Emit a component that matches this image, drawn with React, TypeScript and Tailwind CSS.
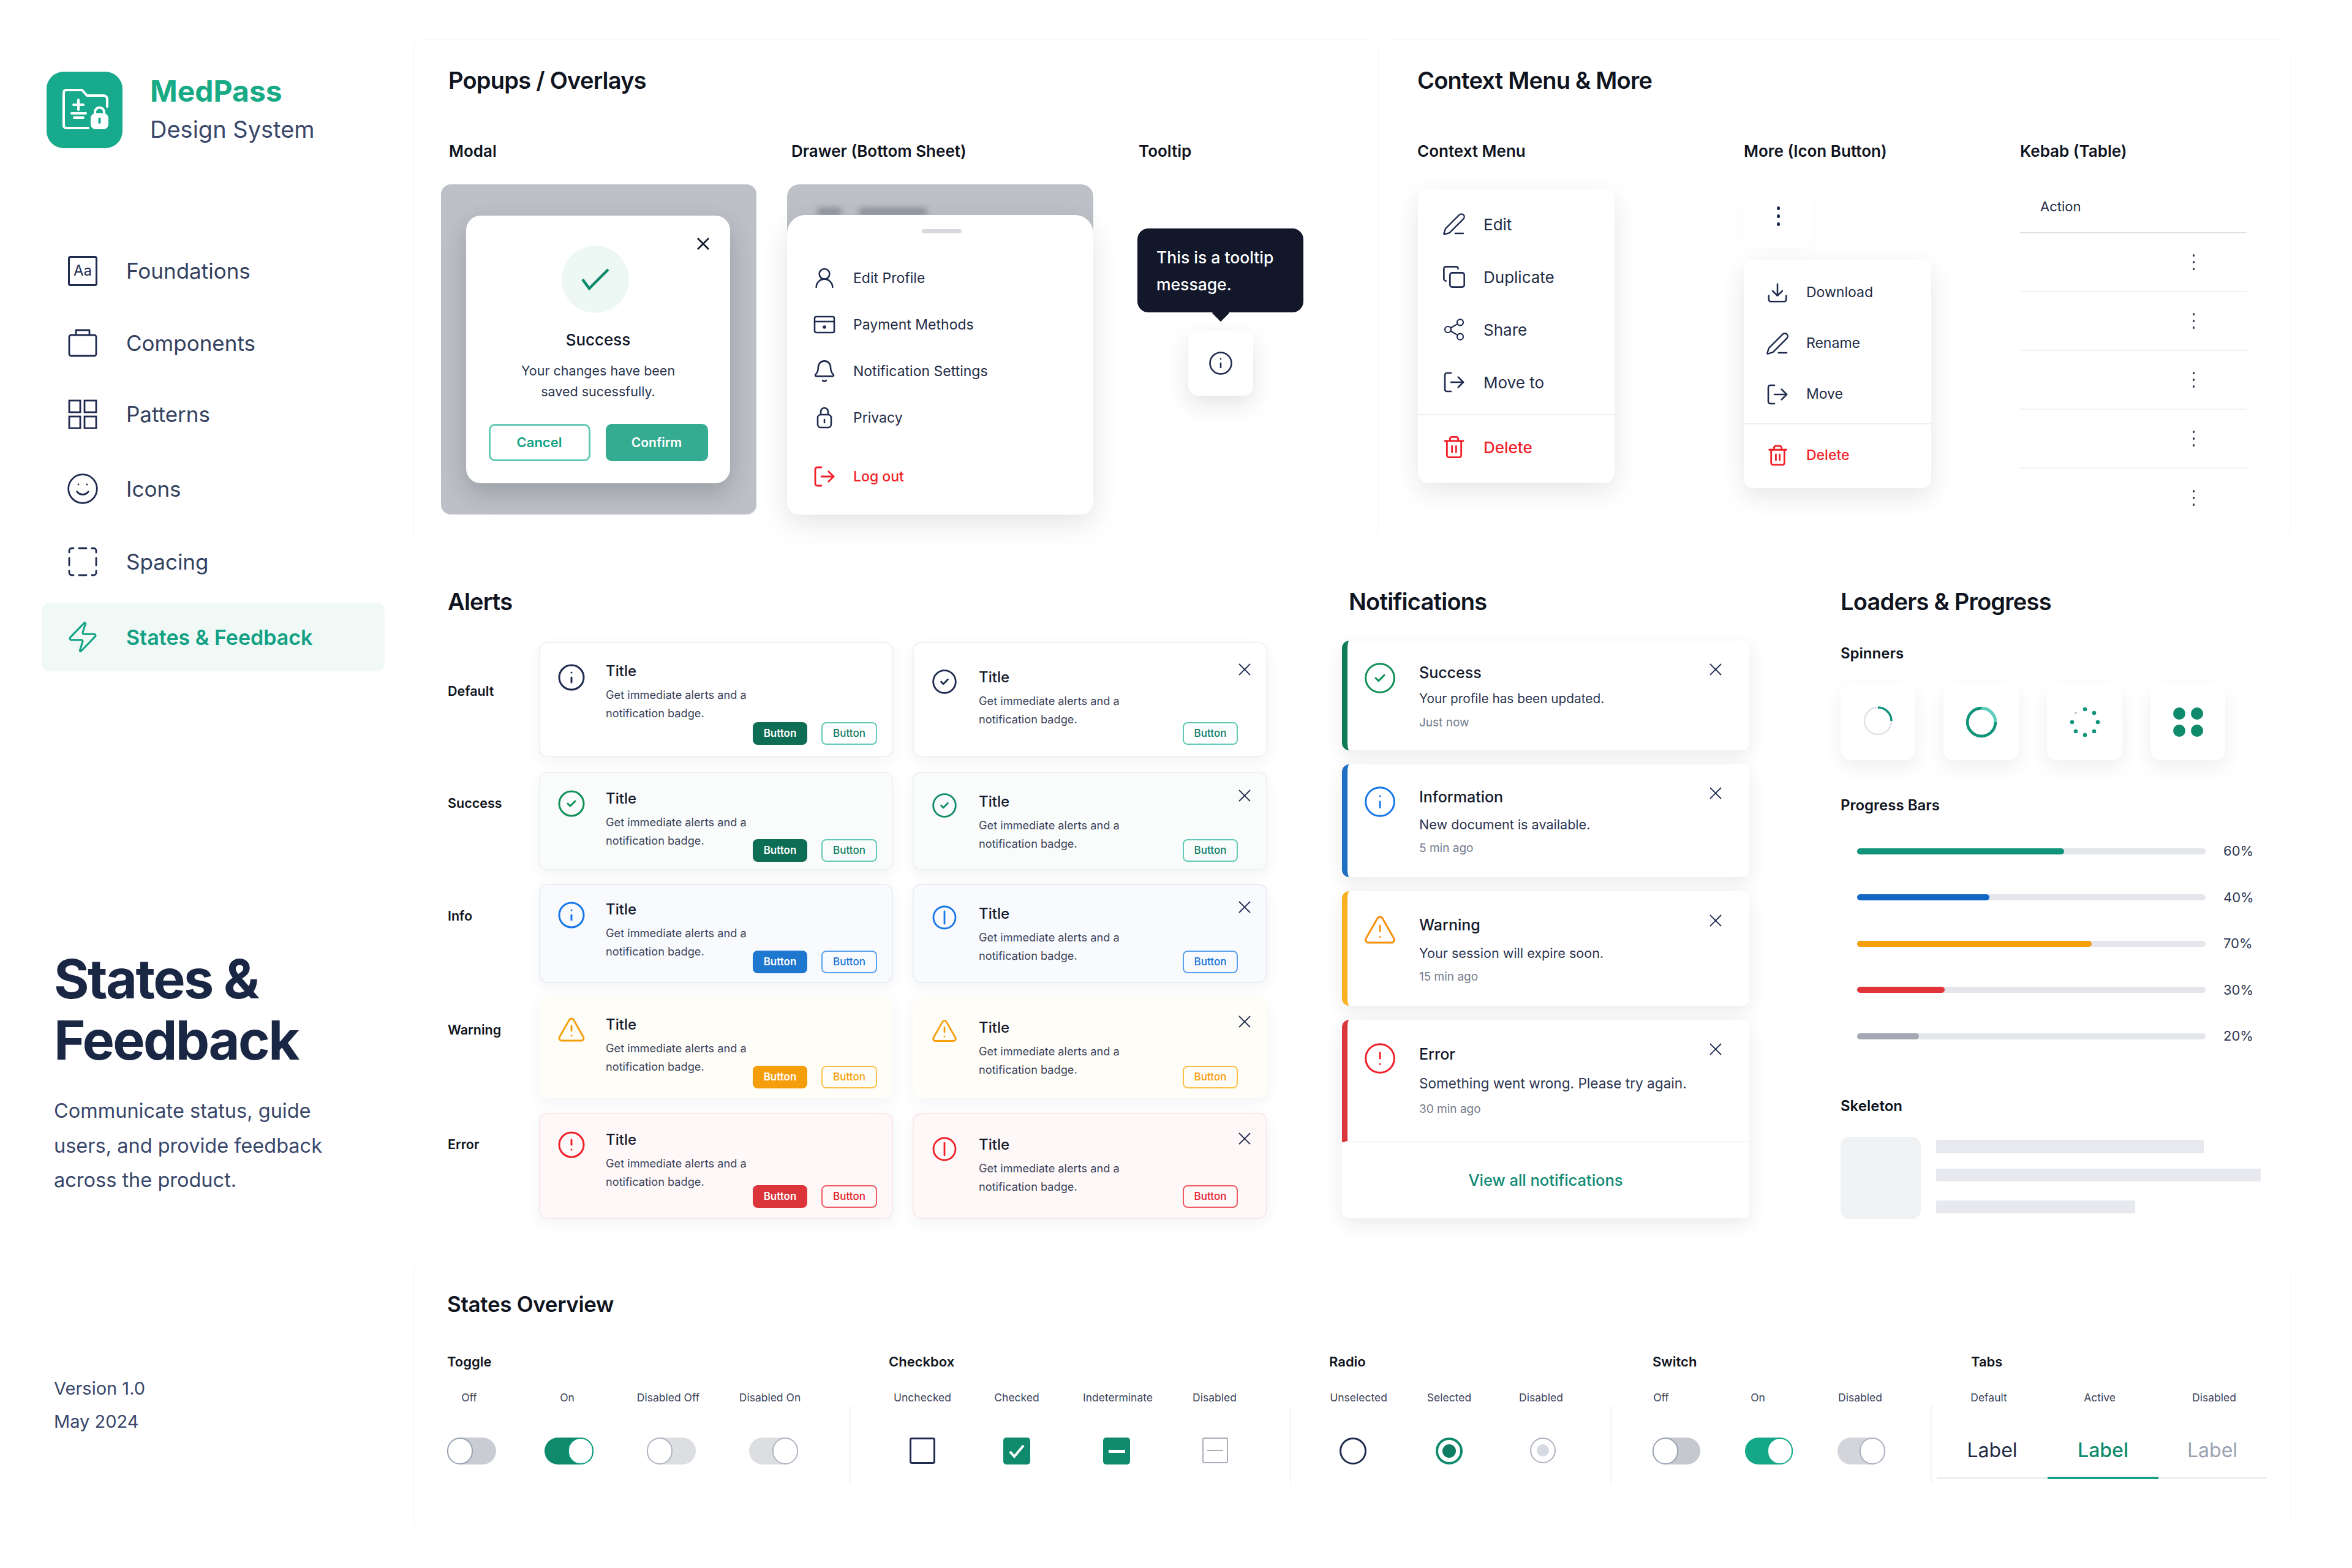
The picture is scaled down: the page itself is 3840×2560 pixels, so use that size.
import React from 'react';
import { Bell, CircleAlert, CircleCheck, Copy, Download, Info, LogOut, PenLine, Share2, Smile, Trash2, TriangleAlert, UserRound, Zap } from 'lucide-react';

const navy = '#1e2b4f';

const LogoMark: React.FC = () => (
    <div className="w-[124px] h-[125px] rounded-[28px] bg-[#17aa8c] shrink-0">
        <svg viewBox="0 0 124 125" className="w-full h-full" fill="none" stroke="#fff" strokeWidth="4" strokeLinecap="round" strokeLinejoin="round">
            <path d="M68 92H32a4 4 0 0 1-4-4V34a4 4 0 0 1 4-4h26l8 9h27a6 6 0 0 1 6 6v12" />
            <path d="M52 46v16M44 54h16M41 68h23M45 75h15" />
            <rect x="74" y="70" width="25" height="22" rx="6" fill="#fff" />
            <path d="M79 70v-4a7.500 7.500 0 0 1 15 0v4" />
            <path d="M86.500 77v6" stroke="#17aa8c" strokeWidth="4" />
        </svg>
    </div>
);

const BriefcaseIcon = () => (
    <svg viewBox="0 0 48 48" className="w-12 h-12" fill="none" stroke={navy} strokeWidth="2.800" strokeLinejoin="round">
        <rect x="2" y="11" width="44" height="34" rx="3" />
        <path d="M13 11V3h22v8" />
    </svg>
);

const GridIcon = () => (
    <svg viewBox="0 0 48 48" className="w-12 h-12" fill="none" stroke={navy} strokeWidth="2.800">
        <rect x="2" y="2" width="18" height="19" />
        <rect x="27" y="2" width="19" height="19" />
        <rect x="2" y="28" width="18" height="19" />
        <rect x="27" y="28" width="19" height="19" />
    </svg>
);

const SpacingIcon = () => (
    <svg viewBox="0 0 48 48" className="w-12 h-12" fill="none" stroke={navy} strokeWidth="2.800" strokeLinecap="round">
        <path d="M2 9V6a4 4 0 0 1 4-4h3M18 2h12M39 2h3a4 4 0 0 1 4 4v3M46 18v12M46 39v3a4 4 0 0 1-4 4h-3M30 46H18M9 46H6a4 4 0 0 1-4-4v-3M2 30V18" />
    </svg>
);

const XMark: React.FC<{ className?: string; stroke?: string; weight?: number }> = ({ className, stroke, weight }) => (
    <svg viewBox="0 0 20 20" className={className} fill="none" stroke={stroke ?? navy} strokeWidth={weight ?? 1.800}>
        <path d="M1 1l18 18M19 1L1 19" />
    </svg>
);

const navItems = [
    { label: 'Foundations', h: 'h-[118px]', icon: <div className="w-12 h-[49px] border-[3px] border-[#1e2b4f] rounded-[4px] flex items-center justify-center text-[24px] text-[#1e2b4f]">Aa</div> },
    { label: 'Components', h: 'h-[118px]', icon: <BriefcaseIcon /> },
    { label: 'Patterns', h: 'h-[114px]', icon: <GridIcon /> },
    { label: 'Icons', h: 'h-[130px]', icon: <Smile size={60} strokeWidth={3} absoluteStrokeWidth color={navy} /> },
    { label: 'Spacing', h: 'h-[108px]', icon: <SpacingIcon /> },
];

const Sidebar: React.FC = () => (
    <aside className="w-[675px] h-[2560px] shrink-0 pt-[117px] border-r border-[#f5f6f7]">
        <div className="flex items-center pl-[76px]">
            <LogoMark />
            <div className="ml-[45px]">
                <p className="text-[48px] leading-[62px] font-bold text-[#17aa84]">MedPass</p>
                <p className="text-[38px] leading-[62px] text-[#38476a]">Design System</p>
            </div>
        </div>
        <nav className="mt-[141px] pl-[68px]">
            {navItems.map((item) => (
                <div key={item.label} className={`${item.h} flex items-center pl-[39px]`}>
                    <div className="w-[56px] flex justify-center">{item.icon}</div>
                    <span className="ml-[43px] text-[35px] text-[#33415f]">{item.label}</span>
                </div>
            ))}
            <div className="mt-[13px] h-[112px] w-[560px] rounded-[14px] bg-[#f0f9f6] flex items-center pl-[39px]">
                <div className="w-[56px] flex justify-center"><Zap size={56} strokeWidth={3} absoluteStrokeWidth color="#12a184" /></div>
                <span className="ml-[43px] text-[34px] font-semibold text-[#12a184]">States &amp; Feedback</span>
            </div>
        </nav>
        <div className="pl-[88px]">
            <h1 className="mt-[452px] text-[88px] leading-[100px] font-bold tracking-[-0.03em] text-[#1a2744]">States &amp;<br />Feedback</h1>
            <p className="mt-[38px] text-[32.500px] leading-[56.500px] text-[#38476a]">Communicate status, guide<br />users, and provide feedback<br />across the product.</p>
            <p className="mt-[284px] text-[29px] leading-[54px] text-[#38476a]">Version 1.0<br />May 2024</p>
        </div>
    </aside>
);

const SectionTitle: React.FC<{ children: React.ReactNode; className?: string }> = ({ children, className }) => (
    <h2 className={`text-[38px] leading-[48px] font-semibold tracking-[-0.02em] text-[#0f1420] ${className ?? ''}`}>{children}</h2>
);

const Label: React.FC<{ children: React.ReactNode; className?: string }> = ({ children, className }) => (
    <p className={`text-[26px] leading-[36px] font-semibold text-[#0f1420] whitespace-nowrap ${className ?? ''}`}>{children}</p>
);

const PaymentIcon = () => (
    <svg viewBox="0 0 36 36" className="w-9 h-9" fill="none" stroke={navy} strokeWidth="2.600">
        <rect x="2" y="5" width="32" height="26" rx="2.500" />
        <path d="M2 13h32" />
        <circle cx="18" cy="22" r="1.500" fill={navy} />
    </svg>
);

const TallLock = () => (
    <svg viewBox="0 0 36 36" className="w-9 h-9" fill="none" stroke={navy} strokeWidth="2.600">
        <rect x="7" y="13" width="22" height="21" rx="5" />
        <path d="M12 13V8a6 6 0 0 1 12 0v5" />
        <path d="M18 21v5" strokeLinecap="round" />
    </svg>
);

const drawerItems = [
    { label: 'Edit Profile', icon: <UserRound size={40} strokeWidth={2.600} absoluteStrokeWidth color={navy} /> },
    { label: 'Payment Methods', icon: <PaymentIcon /> },
    { label: 'Notification Settings', icon: <Bell size={40} strokeWidth={2.600} absoluteStrokeWidth color={navy} /> },
    { label: 'Privacy', icon: <TallLock /> },
];

const Overlays: React.FC = () => (
    <section className="w-[1575px] h-[820px] pl-[44px] pt-[42px] rounded-[20px] border border-[#f8f9fa]">
        <SectionTitle className="ml-[12px]">Popups / Overlays</SectionTitle>
        <div className="mt-[74px] flex items-start">
            <div className="w-[515px]">
                <Label className="ml-[13px]">Modal</Label>
                <div className="mt-[36px] h-[539px] rounded-[16px] bg-[#bdc0c6] pl-[41px] pt-[51px]">
                    <div className="relative w-[431px] h-[437px] rounded-[24px] bg-white shadow-[0_16px_40px_rgba(30,35,50,0.22)] flex flex-col items-center pt-[49px]">
                        <XMark stroke="#10162a" weight={2.600} className="absolute top-[36px] right-[34px] w-5 h-5" />
                        <div className="w-[110px] h-[110px] rounded-full bg-[#edf8f5] flex items-center justify-center mr-[9px]">
                            <svg viewBox="0 0 46 36" className="w-[46px] h-[36px]" fill="none" stroke="#0f8a6c" strokeWidth="4.500">
                                <path d="M2 18l11 15L44 2" />
                            </svg>
                        </div>
                        <p className="mt-[26px] text-[26px] leading-[36px] font-medium text-[#10162a]">Success</p>
                        <p className="mt-[15px] text-[21.500px] leading-[34px] text-center text-[#2c3650]">Your changes have been<br />saved sucessfully.</p>
                        <div className="mt-[36px] flex gap-[25px]">
                            <div className="w-[166px] h-[61px] rounded-[10px] border-[3px] border-[#62c9b6] flex items-center justify-center text-[22px] font-semibold text-[#12a184]">Cancel</div>
                            <div className="w-[167px] h-[61px] rounded-[10px] bg-[#35ab92] flex items-center justify-center text-[21px] font-semibold text-white">Confirm</div>
                        </div>
                    </div>
                </div>
            </div>
            <div className="w-[500px] ml-[50px]">
                <Label className="ml-[7px]">Drawer (Bottom Sheet)</Label>
                <div className="mt-[36px] h-[90px] rounded-t-[20px] bg-[#bdc0c6] flex gap-[30px] pl-[50px] pt-[38px]">
                    <div className="w-[38px] h-[14px] bg-[#8f939c] blur-[5px]" />
                    <div className="w-[110px] h-[14px] bg-[#8f939c] blur-[5px]" />
                </div>
                <div className="relative -mt-[40px] h-[489px] rounded-t-[30px] rounded-b-[20px] bg-white shadow-[0_14px_44px_rgba(30,35,50,0.12)] pt-[23px]">
                    <div className="ml-[220px] w-[65px] h-[7px] rounded-full bg-[#d6d9de]" />
                    <div className="mt-[35px] pl-[41px]">
                        {drawerItems.map((item) => (
                            <div key={item.label} className="h-[76px] flex items-center">
                                <div className="w-10 flex justify-center">{item.icon}</div>
                                <span className="ml-[27px] text-[23px] text-[#222c45]">{item.label}</span>
                            </div>
                        ))}
                        <div className="mt-[20px] h-[76px] flex items-center">
                            <div className="w-10 flex justify-center"><LogOut size={40} strokeWidth={2.800} absoluteStrokeWidth color="#f01f28" /></div>
                            <span className="ml-[27px] text-[23px] font-medium text-[#f01f28]">Log out</span>
                        </div>
                    </div>
                </div>
            </div>
            <div className="w-[271px] ml-[72px]">
                <Label className="ml-[2px]">Tooltip</Label>
                <div className="relative mt-[108px] h-[137px] rounded-[18px] bg-[#12172a] pl-[31px] pt-[25px] text-[26.500px] leading-[44px] font-medium text-white whitespace-nowrap">
                    This is a tooltip<br />message.
                    <div className="absolute left-[126px] -bottom-[11px] w-[20px] h-[20px] rotate-45 bg-[#12172a]" />
                </div>
                <div className="mt-[30px] mx-auto w-[106px] h-[106px] rounded-[16px] bg-white shadow-[0_14px_36px_rgba(30,35,50,0.12)] flex items-center justify-center">
                    <Info size={42} strokeWidth={2.600} absoluteStrokeWidth color={navy} />
                </div>
            </div>
        </div>
    </section>
);

const contextItems = [
    { label: 'Edit', icon: <PenLine size={44} strokeWidth={2.600} absoluteStrokeWidth color={navy} /> },
    { label: 'Duplicate', icon: <Copy size={40} strokeWidth={2.600} absoluteStrokeWidth color={navy} /> },
    { label: 'Share', icon: <Share2 size={40} strokeWidth={2.200} absoluteStrokeWidth color={navy} /> },
    { label: 'Move to', icon: <LogOut size={40} strokeWidth={2.600} absoluteStrokeWidth color={navy} /> },
];

const moreItems = [
    { label: 'Download', icon: <Download size={38} strokeWidth={2.600} absoluteStrokeWidth color={navy} /> },
    { label: 'Rename', icon: <PenLine size={42} strokeWidth={2.600} absoluteStrokeWidth color={navy} /> },
    { label: 'Move', icon: <LogOut size={40} strokeWidth={2.600} absoluteStrokeWidth color={navy} /> },
];

const Kebab: React.FC<{ big?: boolean }> = ({ big }) => (
    <div className="flex flex-col gap-[7px]">
        <span className={big ? 'w-[5px] h-[6px] rounded-full bg-[#1e2b4f]' : 'w-[3px] h-[4px] rounded-full bg-[#2c3650]'} />
        <span className={big ? 'w-[5px] h-[6px] rounded-full bg-[#1e2b4f]' : 'w-[3px] h-[4px] rounded-full bg-[#2c3650]'} />
        <span className={big ? 'w-[5px] h-[6px] rounded-full bg-[#1e2b4f]' : 'w-[3px] h-[4px] rounded-full bg-[#2c3650]'} />
    </div>
);

const ContextMore: React.FC = () => (
    <section className="w-[1490px] h-[820px] pl-[63px] pt-[42px] rounded-[20px] border border-[#f8f9fa]">
        <SectionTitle>Context Menu &amp; More</SectionTitle>
        <div className="mt-[74px] flex items-start">
            <div className="w-[533px]">
                <Label>Context Menu</Label>
                <div className="mt-[43px] ml-px w-[321px] h-[480px] rounded-[16px] bg-white shadow-[0_14px_40px_rgba(30,35,50,0.11)] pt-[15px]">
                    {contextItems.map((item) => (
                        <div key={item.label} className="h-[86px] flex items-center pl-[39px]">
                            <div className="w-10 flex justify-center">{item.icon}</div>
                            <span className="ml-[28px] text-[26px] text-[#222c45]">{item.label}</span>
                        </div>
                    ))}
                    <div className="mt-[9px] border-t-2 border-[#eff0f2]" />
                    <div className="mt-[9px] h-[86px] flex items-center pl-[39px]">
                        <div className="w-10 flex justify-center"><Trash2 size={40} strokeWidth={2.800} absoluteStrokeWidth color="#f01f28" /></div>
                        <span className="ml-[28px] text-[26px] font-medium text-[#f01f28]">Delete</span>
                    </div>
                </div>
            </div>
            <div className="w-[451px]">
                <Label>More (Icon Button)</Label>
                <div className="mt-[36px] w-[113px] h-[103px] rounded-[14px] bg-white shadow-[0_10px_28px_rgba(30,35,50,0.02)] flex items-center justify-center">
                    <Kebab big />
                </div>
                <div className="mt-[20px] w-[306px] h-[373px] rounded-[16px] bg-white shadow-[0_14px_40px_rgba(30,35,50,0.11)] pt-[12px]">
                    {moreItems.map((item) => (
                        <div key={item.label} className="h-[83px] flex items-center pl-[35px]">
                            <div className="w-10 flex justify-center">{item.icon}</div>
                            <span className="ml-[27px] text-[23px] text-[#222c45]">{item.label}</span>
                        </div>
                    ))}
                    <div className="mt-[6px] border-t-2 border-[#eff0f2]" />
                    <div className="mt-[9px] h-[83px] flex items-center pl-[35px]">
                        <div className="w-10 flex justify-center"><Trash2 size={37} strokeWidth={2.800} absoluteStrokeWidth color="#f01f28" /></div>
                        <span className="ml-[27px] text-[23px] font-medium text-[#f01f28]">Delete</span>
                    </div>
                </div>
            </div>
            <div className="w-[370px]">
                <Label>Kebab (Table)</Label>
                <div className="mt-[36px] h-[80px] border-b-2 border-[#dfe1e5] pl-[33px] pt-[21px] text-[22px] leading-[30px] text-[#222c45]">Action</div>
                {[0, 1, 2, 3, 4].map((i) => (
                    <div key={i} className={i < 4 ? 'h-[96px] border-b-2 border-[#f0f1f3] flex items-center justify-end pr-[85px]' : 'h-[96px] flex items-center justify-end pr-[85px]'}>
                        <Kebab />
                    </div>
                ))}
            </div>
        </div>
    </section>
);

const CircleLine: React.FC<{ color: string }> = ({ color }) => (
    <svg viewBox="0 0 44 44" className="w-11 h-11" fill="none" stroke={color} strokeWidth="2.800" strokeLinecap="round">
        <circle cx="22" cy="22" r="18" />
        <path d="M22 12v20" />
    </svg>
);

const alertThemes = {
    default: { card: 'bg-white border-[#f0f1f3]', solid: 'bg-[#0e6e55]', outline: 'border-[#62c9b6] text-[#0e7c66]' },
    success: { card: 'bg-[#f9fcfb] border-[#eef3f1]', solid: 'bg-[#0e6e55]', outline: 'border-[#62c9b6] text-[#0e7c66]' },
    info: { card: 'bg-[#f8fafe] border-[#e9eef6]', solid: 'bg-[#1f78cf]', outline: 'border-[#5aa2ee] text-[#1a73d8]' },
    warning: { card: 'bg-[#fffdf8] border-[#fffdf8]', solid: 'bg-[#f59e0b]', outline: 'border-[#fbc14a] text-[#f59e0b]' },
    error: { card: 'bg-[#fff8f8] border-[#f8e8ea]', solid: 'bg-[#dc3539]', outline: 'border-[#ef5b62] text-[#e5212b]' },
};

const alertRows = [
    {
        name: 'Default', theme: alertThemes.default, row: 'h-[188px]', labelTop: 'mt-[63px]',
        leftIcon: <Info size={48} strokeWidth={3} absoluteStrokeWidth color={navy} />, rightIcon: <CircleCheck size={44} strokeWidth={2.800} absoluteStrokeWidth color={navy} />,
        l: ['mt-[32px]', 'mt-[29px]', 'mb-[18px]'], r: ['mt-[41px]', 'mt-[39px]', 'mt-[33px]'],
    },
    {
        name: 'Success', theme: alertThemes.success, row: 'mt-[24px] h-[161px]', labelTop: 'mt-[34px]',
        leftIcon: <CircleCheck size={48} strokeWidth={3} absoluteStrokeWidth color="#0f8f57" />, rightIcon: <CircleCheck size={44} strokeWidth={2.800} absoluteStrokeWidth color="#0f8a6c" />,
        l: ['mt-[26px]', 'mt-[25px]', 'mb-[12px]'], r: ['mt-[31px]', 'mt-[30px]', 'mt-[27px]'],
    },
    {
        name: 'Info', theme: alertThemes.info, row: 'mt-[22px] h-[162px]', labelTop: 'mt-[35px]',
        leftIcon: <Info size={48} strokeWidth={3} absoluteStrokeWidth color="#1677e8" />, rightIcon: <CircleLine color="#1677e8" />,
        l: ['mt-[25px]', 'mt-[23px]', 'mb-[14px]'], r: ['mt-[31px]', 'mt-[30px]', 'mt-[26px]'],
    },
    {
        name: 'Warning', theme: alertThemes.warning, row: 'mt-[23px] h-[165px]', labelTop: 'mt-[36px]',
        leftIcon: <TriangleAlert size={50} strokeWidth={3} absoluteStrokeWidth color="#f59e0b" />, rightIcon: <TriangleAlert size={44} strokeWidth={2.800} absoluteStrokeWidth color="#f59e0b" />,
        l: ['mt-[26px]', 'mt-[26px]', 'mb-[14px]'], r: ['mt-[31px]', 'mt-[31px]', 'mt-[28px]'],
    },
    {
        name: 'Error', theme: alertThemes.error, row: 'mt-[24px] h-[173px]', labelTop: 'mt-[34px]',
        leftIcon: <CircleAlert size={48} strokeWidth={3} absoluteStrokeWidth color="#f01f28" />, rightIcon: <CircleLine color="#f01f28" />,
        l: ['mt-[26px]', 'mt-[25px]', 'mb-[16px]'], r: ['mt-[35px]', 'mt-[33px]', 'mt-[30px]'],
    },
];

const AlertText: React.FC<{ className: string }> = ({ className }) => (
    <div className={className}>
        <p className="text-[24px] leading-[34px] font-medium text-[#141a2c]">Title</p>
        <p className="mt-[6px] text-[18.200px] leading-[30px] text-[#3a4358] whitespace-nowrap">Get immediate alerts and a<br />notification badge.</p>
    </div>
);

const Alerts: React.FC = () => (
    <section className="w-[1450px] h-[1100px] pl-[51px] pt-[33px]">
        <SectionTitle>Alerts</SectionTitle>
        <div className="mt-[42px]">
            {alertRows.map((row) => (
                <div key={row.name} className={`flex ${row.row}`}>
                    <p className={`w-[149px] text-[21.500px] leading-[34px] font-semibold text-[#0f1420] ${row.labelTop}`}>{row.name}</p>
                    <div className={`w-[578px] flex items-start rounded-[14px] border-2 shadow-[0_8px_24px_rgba(30,35,50,0.05)] ${row.theme.card}`}>
                        <div className={`ml-[27px] w-12 shrink-0 flex justify-center ${row.l[0]}`}>{row.leftIcon}</div>
                        <AlertText className={`ml-[32px] ${row.l[1]}`} />
                        <div className={`ml-auto mr-[24px] self-end flex gap-[23px] ${row.l[2]}`}>
                            <div className={`w-[89px] h-[37px] rounded-[8px] flex items-center justify-center text-[17px] font-semibold text-white ${row.theme.solid}`}>Button</div>
                            <div className={`w-[91px] h-[37px] rounded-[8px] border-2 flex items-center justify-center text-[17px] font-medium ${row.theme.outline}`}>Button</div>
                        </div>
                    </div>
                    <div className={`ml-[32px] w-[579px] flex items-start rounded-[14px] border-2 shadow-[0_8px_24px_rgba(30,35,50,0.05)] ${row.theme.card}`}>
                        <div className={`ml-[28px] w-11 shrink-0 ${row.r[0]}`}>{row.rightIcon}</div>
                        <AlertText className={`ml-[34px] ${row.r[1]}`} />
                        <div className={`ml-auto self-end ${row.l[2]}`}>
                            <div className={`w-[90px] h-[37px] rounded-[8px] border-2 flex items-center justify-center text-[17px] font-medium ${row.theme.outline}`}>Button</div>
                        </div>
                        <XMark className={`ml-[1px] mr-[25px] w-5 h-5 shrink-0 ${row.r[2]}`} />
                    </div>
                </div>
            ))}
        </div>
    </section>
);

const notices = [
    { title: 'Success', body: 'Your profile has been updated.', size: 'text-[20.800px]', time: 'Just now', bar: 'border-[#0f7a55]', h: 'h-[179px]', icon: <CircleCheck size={56} strokeWidth={3} absoluteStrokeWidth color="#0f8f57" />, c: ['mt-[33px]', 'mt-[35px]', 'mt-[11px]', 'mt-[10px]', 'mt-[37px]'] },
    { title: 'Information', body: 'New document is available.', size: 'text-[21.600px]', time: '5 min ago', bar: 'border-[#1f6fc2]', h: 'h-[184px]', icon: <Info size={56} strokeWidth={3} absoluteStrokeWidth color="#1677e8" />, c: ['mt-[33px]', 'mt-[36px]', 'mt-[13px]', 'mt-[10px]', 'mt-[37px]'] },
    { title: 'Warning', body: 'Your session will expire soon.', size: 'text-[21.600px]', time: '15 min ago', bar: 'border-[#fbb024]', h: 'h-[187px]', icon: <TriangleAlert size={56} strokeWidth={3} absoluteStrokeWidth color="#f58f0b" />, c: ['mt-[35px]', 'mt-[38px]', 'mt-[14px]', 'mt-[10px]', 'mt-[38px]'] },
];

const Notice: React.FC<{ n: (typeof notices)[number]; className?: string }> = ({ n, className }) => (
    <div className={`flex items-start border-l-[9px] ${n.bar} ${n.h} ${className ?? ''}`}>
        <div className={`ml-[25px] w-14 shrink-0 ${n.c[0]}`}>{n.icon}</div>
        <div className={`ml-[36px] ${n.c[1]}`}>
            <p className="text-[25px] leading-[34px] font-medium text-[#141a2c]">{n.title}</p>
            <p className={`leading-[30px] text-[#2c3650] whitespace-nowrap ${n.size} ${n.c[2]}`}>{n.body}</p>
            <p className={`text-[19px] leading-[28px] text-[#737b8c] ${n.c[3]}`}>{n.time}</p>
        </div>
        <XMark className={`ml-auto mr-[45px] w-[20px] h-[20px] shrink-0 ${n.c[4]}`} />
    </div>
);

const errorNotice = { title: 'Error', body: 'Something went wrong. Please try again.', size: 'text-[22.600px]', time: '30 min ago', bar: 'border-[#d9363e]', h: 'h-[200px]', icon: <CircleAlert size={56} strokeWidth={3} absoluteStrokeWidth color="#f01f28" />, c: ['mt-[35px]', 'mt-[39px]', 'mt-[16px]', 'mt-[13px]', 'mt-[38px]'] };

const Notifications: React.FC = () => (
    <section className="w-[770px] h-[1100px] ml-[30px] pl-[31px] pt-[33px]">
        <SectionTitle className="ml-[11px]">Notifications</SectionTitle>
        <div className="mt-[40px] w-[665px] flex flex-col gap-[23px]">
            {notices.map((n) => (
                <Notice key={n.title} n={n} className="rounded-[12px] bg-white shadow-[0_10px_30px_rgba(30,35,50,0.09)]" />
            ))}
            <div className="rounded-[12px] bg-white shadow-[0_10px_30px_rgba(30,35,50,0.09)]">
                <Notice n={errorNotice} className="rounded-tl-[12px] border-b-2 border-b-[#f5f6f7]" />
                <div className="h-[124px] flex items-center justify-center text-[25.500px] font-medium text-[#0f8a74]">View all notifications</div>
            </div>
        </div>
    </section>
);

const progress = [
    { pct: '60%', w: 'w-[338px]', fill: 'bg-[#0f947a]' },
    { pct: '40%', w: 'w-[216px]', fill: 'bg-[#1267c4]' },
    { pct: '70%', w: 'w-[383px]', fill: 'bg-[#f59f0b]' },
    { pct: '30%', w: 'w-[143px]', fill: 'bg-[#e1333a]' },
    { pct: '20%', w: 'w-[101px]', fill: 'bg-[#a3a8b2]' },
];

const spinnerDots = [[25, 4], [40, 10], [46, 25], [40, 40], [25, 46], [10, 40], [4, 25]];

const Spinners: React.FC = () => (
    <div className="mt-[33px] flex gap-[46px]">
        <div className="w-[122px] h-[125px] rounded-[16px] bg-white shadow-[0_12px_30px_rgba(30,35,50,0.07)] flex items-center justify-center">
            <svg viewBox="0 0 50 50" className="w-[50px] h-[50px] -mt-[3px]" fill="none" strokeWidth="2.500">
                <circle cx="25" cy="25" r="22" stroke="#dfe2e8" />
                <path d="M25 3a22 22 0 0 1 22 22" stroke="#0f947a" strokeWidth="3.500" />
            </svg>
        </div>
        <div className="w-[123px] h-[125px] rounded-[16px] bg-white shadow-[0_12px_30px_rgba(30,35,50,0.07)] flex items-center justify-center">
            <svg viewBox="0 0 50 50" className="w-[52px] h-[52px]" fill="none" strokeWidth="4.500">
                <circle cx="25" cy="25" r="22" stroke="#0f947a" />
                <path d="M25 3a22 22 0 0 1 22 22" stroke="#5fd0bd" />
            </svg>
        </div>
        <div className="w-[123px] h-[125px] rounded-[16px] bg-white shadow-[0_12px_30px_rgba(30,35,50,0.07)] flex items-center justify-center">
            <svg viewBox="0 0 50 50" className="w-[50px] h-[50px]" fill="#0f947a">
                {spinnerDots.map(([cx, cy]) => <circle key={`${cx}-${cy}`} cx={cx} cy={cy} r="3.300" />)}
                <circle cx="10" cy="10" r="2" fill="#b9c6d3" />
            </svg>
        </div>
        <div className="w-[122px] h-[125px] rounded-[16px] bg-white shadow-[0_12px_30px_rgba(30,35,50,0.07)] flex items-center justify-center">
            <div className="grid grid-cols-2 gap-x-[9px] gap-y-[8px]">
                <span className="w-5 h-[20px] rounded-full bg-[#0f8a6c]" />
                <span className="w-5 h-[20px] rounded-full bg-[#0f8a6c]" />
                <span className="w-5 h-[20px] rounded-full bg-[#0f8a6c]" />
                <span className="w-5 h-[20px] rounded-full bg-[#0f8a6c]" />
            </div>
        </div>
    </div>
);

const Loaders: React.FC = () => (
    <section className="w-[780px] h-[1100px] ml-[30px] pl-[45px] pt-[33px]">
        <SectionTitle>Loaders &amp; Progress</SectionTitle>
        <p className="mt-[45px] text-[24px] leading-[32px] font-semibold text-[#0f1420]">Spinners</p>
        <Spinners />
        <p className="mt-[58px] text-[24px] leading-[32px] font-semibold text-[#0f1420]">Progress Bars</p>
        <div className="mt-[21px] pl-[27px]">
            {progress.map((p) => (
                <div key={p.pct} className="h-[75.500px] flex items-center">
                    <div className="w-[569px] h-[10px] rounded-full bg-[#e4e6eb]">
                        <div className={`h-full rounded-full ${p.w} ${p.fill}`} />
                    </div>
                    <span className="ml-[29px] text-[22px] text-[#2c3650]">{p.pct}</span>
                </div>
            ))}
        </div>
        <p className="mt-[60px] text-[24px] leading-[32px] font-semibold text-[#0f1420]">Skeleton</p>
        <div className="mt-[34px] flex">
            <div className="w-[131px] h-[134px] rounded-[14px] bg-[#f1f2f4]" />
            <div className="ml-[25px] pt-[5px]">
                <div className="w-[437px] h-[22px] rounded-[2px] bg-[#e7e9ee]" />
                <div className="mt-[25px] w-[530px] h-[21px] rounded-[2px] bg-[#e7e9ee]" />
                <div className="mt-[31px] w-[325px] h-[21px] rounded-[2px] bg-[#e7e9ee]" />
            </div>
        </div>
    </section>
);

const Toggle: React.FC<{ on?: boolean; track: string; knob: string; w?: string; className?: string }> = ({ on, track, knob, w, className }) => (
    <div className={`${w ?? 'w-[80px]'} h-[44px] rounded-full flex ${on ? 'justify-end' : 'justify-start'} ${track} ${className ?? ''}`}>
        <div className={`w-[42px] h-[44px] rounded-full bg-white border-2 ${knob}`} />
    </div>
);

const Sub: React.FC<{ children: React.ReactNode; className: string }> = ({ children, className }) => (
    <div className={`flex justify-center text-[17.500px] leading-[26px] text-[#3a4358] whitespace-nowrap ${className}`}><span>{children}</span></div>
);

const GroupTitle: React.FC<{ children: React.ReactNode; className?: string }> = ({ children, className }) => (
    <p className={`text-[22px] leading-[32px] font-semibold text-[#0f1420] ${className ?? ''}`}>{children}</p>
);

const StatesOverview: React.FC = () => (
    <section className="mt-[33px] w-[3065px] h-[440px] pl-[54px] pt-[47px] rounded-[20px] border border-[#f8f9fa]">
        <h2 className="text-[35px] leading-[46px] font-semibold tracking-[-0.01em] text-[#0f1420]">States Overview</h2>
        <div className="mt-[55px] flex">
            <div className="w-[657px]">
                <GroupTitle>Toggle</GroupTitle>
                <div className="mt-[30px] flex">
                    <Sub className="w-[72px]">Off</Sub>
                    <Sub className="w-[80px] ml-[84px]">On</Sub>
                    <Sub className="w-[80px] ml-[85px]">Disabled Off</Sub>
                    <Sub className="w-[80px] ml-[86px]">Disabled On</Sub>
                </div>
                <div className="h-[127px] pt-[52px] flex">
                    <Toggle track="bg-[#c9ccd3]" knob="border-[#9aa3b2]" />
                    <Toggle on track="bg-[#0f8a6c]" knob="border-[#0f9a7c]" className="ml-[79px]" />
                    <Toggle track="bg-[#dcdee2]" knob="border-[#b0b5c0]" className="ml-[87px]" />
                    <Toggle on track="bg-[#dcdee2]" knob="border-[#b0b5c0]" className="ml-[87px]" />
                </div>
            </div>
            <div className="w-[719px]">
                <GroupTitle className="pl-[64px]">Checkbox</GroupTitle>
                <div className="mt-[30px] pl-[64px] flex">
                    <Sub className="w-[110px]">Unchecked</Sub>
                    <Sub className="w-[110px] ml-[44px]">Checked</Sub>
                    <Sub className="w-[110px] ml-[55px]">Indeterminate</Sub>
                    <Sub className="w-[110px] ml-[48px]">Disabled</Sub>
                </div>
                <div className="h-[127px] pt-[52px] pl-[62px] border-l-2 border-[#f3f4f6] flex">
                    <div className="w-[110px] flex justify-center"><div className="w-[42px] h-[43px] rounded-[4px] border-[3px] border-[#1e2b4f]" /></div>
                    <div className="w-[110px] ml-[44px] flex justify-center">
                        <div className="w-[44px] h-[44px] rounded-[5px] bg-[#0f8a6c] flex items-center justify-center">
                            <svg viewBox="0 0 28 24" className="w-[28px] h-[24px]" fill="none" stroke="#fff" strokeWidth="4"><path d="M3 13l7 8L25 3" /></svg>
                        </div>
                    </div>
                    <div className="w-[110px] ml-[53px] flex justify-center">
                        <div className="w-[44px] h-[44px] rounded-[5px] bg-[#0f8a6c] flex items-center justify-center"><div className="w-[27px] h-[5px] bg-white" /></div>
                    </div>
                    <div className="w-[110px] ml-[51px] flex justify-center">
                        <div className="w-[42px] h-[42px] rounded-[3px] border-2 border-[#a9aeb8] flex items-center justify-center"><div className="w-[26px] h-[2px] bg-[#a9aeb8]" /></div>
                    </div>
                </div>
            </div>
            <div className="w-[523px]">
                <GroupTitle className="pl-[64px]">Radio</GroupTitle>
                <div className="mt-[30px] pl-[64px] flex">
                    <Sub className="w-[96px]">Unselected</Sub>
                    <Sub className="w-[78px] ml-[61px]">Selected</Sub>
                    <Sub className="w-[78px] ml-[72px]">Disabled</Sub>
                </div>
                <div className="h-[127px] pt-[52px] pl-[62px] border-l-2 border-[#f3f4f6] flex">
                    <div className="w-[78px] flex justify-center"><div className="w-[44px] h-[44px] rounded-full border-[3px] border-[#1e2b4f]" /></div>
                    <div className="w-[78px] ml-[79px] flex justify-center">
                        <div className="w-[44px] h-[44px] rounded-full border-[4px] border-[#0f8a6c] flex items-center justify-center"><div className="w-[22px] h-[22px] rounded-full bg-[#0f7d63]" /></div>
                    </div>
                    <div className="w-[78px] ml-[75px] flex justify-center">
                        <div className="w-[42px] h-[42px] rounded-full border-2 border-[#aab1bd] flex items-center justify-center"><div className="w-[20px] h-[20px] rounded-full bg-[#d5dae3]" /></div>
                    </div>
                </div>
            </div>
            <div className="w-[523px]">
                <GroupTitle className="pl-[69px]">Switch</GroupTitle>
                <div className="mt-[30px] pl-[69px] flex">
                    <Sub className="w-[28px]">Off</Sub>
                    <Sub className="w-[28px] ml-[130px]">On</Sub>
                    <Sub className="w-[78px] ml-[114px]">Disabled</Sub>
                </div>
                <div className="h-[127px] pt-[52px] pl-[67px] border-l-2 border-[#f3f4f6] flex">
                    <Toggle w="w-[78px]" track="bg-[#c5c8cf]" knob="border-[#9aa3b2]" />
                    <Toggle w="w-[78px]" on track="bg-[#14a888]" knob="border-[#14a888]" className="ml-[73px]" />
                    <Toggle w="w-[78px]" on track="bg-[#d3d5da]" knob="border-[#aab1bd]" className="ml-[73px]" />
                </div>
            </div>
            <div className="w-[548px]">
                <GroupTitle className="pl-[66px]">Tabs</GroupTitle>
                <div className="mt-[30px] pl-[66px] flex">
                    <Sub className="w-[58px]">Default</Sub>
                    <Sub className="w-[58px] ml-[123px]">Active</Sub>
                    <Sub className="w-[58px] ml-[129px]">Disabled</Sub>
                </div>
                <div className="h-[127px] pl-[8px] border-l-2 border-[#f3f4f6] flex">
                    <div className="w-[181px] h-[119px] pt-[49px] border-b-2 border-[#e6e7ea] text-center text-[32px] leading-[48px] text-[#222c45]">Label</div>
                    <div className="w-[181px] h-[120px] pt-[49px] border-b-4 border-[#15a088] text-center text-[32px] leading-[48px] font-medium text-[#0f8a6c]">Label</div>
                    <div className="w-[176px] h-[119px] pt-[49px] border-b-2 border-[#e6e7ea] text-center text-[32px] leading-[48px] text-[#9aa1af]">Label</div>
                </div>
            </div>
        </div>
    </section>
);

const App: React.FC = () => (
    <div className="w-[3840px] h-[2560px] flex bg-white font-[Inter,sans-serif] overflow-hidden">
        <Sidebar />
        <main className="flex-1 pt-[64px]">
            <div className="flex">
                <Overlays />
                <ContextMore />
            </div>
            <div className="mt-[41px] flex pl-[5px]">
                <Alerts />
                <Notifications />
                <Loaders />
            </div>
            <StatesOverview />
        </main>
    </div>
);

export default App;
